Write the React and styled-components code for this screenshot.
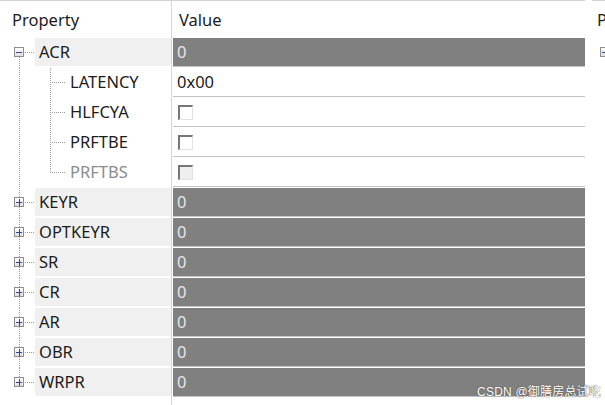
import React from "react";
import styled, { createGlobalStyle } from "styled-components";

const GlobalStyle = createGlobalStyle`
  html, body {
    margin: 0;
    padding: 0;
    background: #fff;
  }
  body {
    font-family: "Noto Sans", "Liberation Sans", sans-serif;
  }
`;

const Page = styled.div`
  position: relative;
  width: 605px;
  height: 405px;
  display: flex;
  gap: 7px;
  overflow: hidden;
  background: #fff;
`;

const Grid = styled.div`
  width: 585px;
  flex: none;
  display: flex;
  flex-direction: column;
  border-top: 1px solid #d2d2d2;
`;

const SidePanel = styled.div`
  flex: 1;
  overflow: hidden;
  display: flex;
  flex-direction: column;
  border-top: 1px solid #d2d2d2;
`;

const HeaderRow = styled.div`
  height: 37px;
  display: flex;
  flex: none;
`;

const HeaderCell = styled.div`
  width: ${(p) => (p.$wide ? "auto" : "159px")};
  flex: ${(p) => (p.$wide ? "1" : "none")};
  padding: 0 0 1px ${(p) => p.$pad}px;
  display: flex;
  align-items: center;
  font-size: 16.5px;
  color: #1c1c1c;
  white-space: nowrap;
  border-right: ${(p) => (p.$wide ? "none" : "1px solid #d6d6d6")};
`;

const Row = styled.div`
  height: 30px;
  display: flex;
  flex: none;
`;

const NameColumn = styled.div`
  width: 171px;
  flex: none;
  display: flex;
  border-right: 1px solid #d6d6d6;
`;

const Filler = styled.div`
  flex: 1;
  display: flex;
`;

const Name = styled.div`
  flex: 1;
  height: 29px;
  border-bottom: 1px solid #fff;
  background: ${(p) => (p.$root ? "#f0f0f0" : "#fff")};
  color: ${(p) => (p.$disabled ? "#8c8c8c" : "#1c1c1c")};
  font-size: 16.5px;
  padding: 0 0 2px 4px;
  box-sizing: border-box;
  display: flex;
  align-items: center;
  white-space: nowrap;
`;

const Value = styled.div`
  flex: 1;
  margin-left: 1px;
  height: 29px;
  border-bottom: 1px solid #c4c4c4;
  background: ${(p) => (p.$root ? "#808080" : "#fff")};
  color: ${(p) => (p.$root ? "#e6e6e6" : "#1c1c1c")};
  font-size: 16.5px;
  padding: 0 0 2px 4px;
  box-sizing: border-box;
  display: flex;
  align-items: center;
`;

const Check = styled.span`
  width: 12px;
  height: 12px;
  margin: 3px 0 0 1px;
  border-top: 2px solid #777;
  border-left: 2px solid #777;
  border-right: 1px solid #e2e2e2;
  border-bottom: 1px solid #e2e2e2;
  background: ${(p) => (p.$disabled ? "#efefef" : "#fff")};
`;

const Watermark = styled.div`
  position: absolute;
  right: 4px;
  bottom: 6px;
  font-family: "Liberation Sans", "Noto Sans CJK SC", sans-serif;
  font-size: 12px;
  color: #fff;
  text-shadow: 0 0 1px #555, 0 0 1px #555;
  letter-spacing: 0.2px;
`;

const DOT = { stroke: "#9c9c9c", strokeWidth: 1, strokeDasharray: "1 1", shapeRendering: "crispEdges" };

function ExpandBox({ x, expanded }) {
  return (
    <g shapeRendering="crispEdges">
      <defs>
        <linearGradient id="boxfill" x1="0" y1="0" x2="0" y2="1">
          <stop offset="0" stopColor="#ffffff" />
          <stop offset="1" stopColor="#dcdcdc" />
        </linearGradient>
      </defs>
      <rect x={x + 0.5} y={9.5} width={9} height={9} rx={1} fill="url(#boxfill)" stroke="#8e8e8e" />
      <line x1={x + 2} y1={14.5} x2={x + 8} y2={14.5} stroke="#2f4790" />
      {!expanded && <line x1={x + 5} y1={11} x2={x + 5} y2={18} stroke="#2f4790" />}
    </g>
  );
}

function TreeGutter({ depth, first, last, expanded, lastChild }) {
  if (depth === 0) {
    return (
      <svg width="35" height="30" style={{ flex: "none" }}>
        {!first && <line x1="19.5" y1="0" x2="19.5" y2="9" {...DOT} />}
        {!last && <line x1="19.5" y1="19" x2="19.5" y2="30" {...DOT} />}
        <line x1="25" y1="14.5" x2="35" y2="14.5" {...DOT} />
        <ExpandBox x={14} expanded={expanded} />
      </svg>
    );
  }
  return (
    <svg width="66" height="30" style={{ flex: "none" }}>
      <line x1="19.5" y1="0" x2="19.5" y2="30" {...DOT} />
      <line x1="50.5" y1="0" x2="50.5" y2={lastChild ? 15 : 30} {...DOT} />
      <line x1="52" y1="14.5" x2="66" y2="14.5" {...DOT} />
    </svg>
  );
}

const registers = [
  {
    name: "ACR",
    value: "0",
    expanded: true,
    children: [
      { name: "LATENCY", value: "0x00" },
      { name: "HLFCYA", check: true },
      { name: "PRFTBE", check: true },
      { name: "PRFTBS", check: true, disabled: true },
    ],
  },
  { name: "KEYR", value: "0" },
  { name: "OPTKEYR", value: "0" },
  { name: "SR", value: "0" },
  { name: "CR", value: "0" },
  { name: "AR", value: "0" },
  { name: "OBR", value: "0" },
  { name: "WRPR", value: "0" },
];

export default function App() {
  const rows = [];
  registers.forEach((reg, i) => {
    rows.push(
      <Row key={reg.name}>
        <NameColumn>
          <TreeGutter depth={0} first={i === 0} last={i === registers.length - 1} expanded={reg.expanded} />
          <Name $root>{reg.name}</Name>
        </NameColumn>
        <Value $root>{reg.value}</Value>
      </Row>
    );
    if (reg.expanded) {
      reg.children.forEach((c, j) => {
        rows.push(
          <Row key={c.name}>
            <NameColumn>
              <TreeGutter depth={1} lastChild={j === reg.children.length - 1} />
              <Name $disabled={c.disabled}>{c.name}</Name>
            </NameColumn>
            <Value>{c.check ? <Check $disabled={c.disabled} /> : c.value}</Value>
          </Row>
        );
      });
    }
  });

  return (
    <>
      <GlobalStyle />
      <Page>
        <Grid>
          <HeaderRow>
            <HeaderCell $pad={12}>Property</HeaderCell>
            <HeaderCell $wide $pad={7}>Value</HeaderCell>
          </HeaderRow>
          {rows}
          <Filler>
            <NameColumn />
          </Filler>
        </Grid>
        <SidePanel>
          <HeaderRow>
            <HeaderCell $wide $pad={5}>Property</HeaderCell>
          </HeaderRow>
          <Row>
            <svg width="20" height="30" style={{ flex: "none" }}>
              <ExpandBox x={8} expanded={false} />
            </svg>
          </Row>
        </SidePanel>
        <Watermark>CSDN @御膳房总试吃</Watermark>
      </Page>
    </>
  );
}
